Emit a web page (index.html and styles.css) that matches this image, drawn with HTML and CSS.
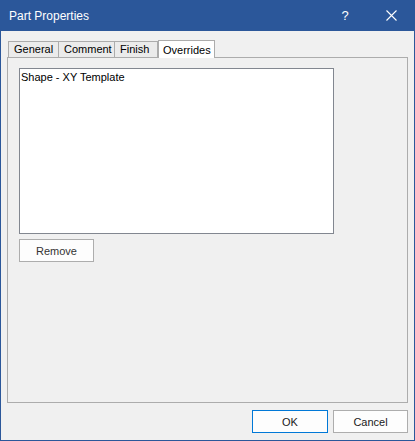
FILE: index.html
```html
<!DOCTYPE html>
<html>
<head>
<meta charset="utf-8">
<link rel="stylesheet" href="styles.css">
</head>
<body>
<div class="window">
  <div class="titlebar">
    <span class="title">Part Properties</span>
    <span class="help">?</span>
    <span class="close">
      <svg width="11" height="11" viewBox="0 0 11 11"><path d="M0.5 0.5 L10.5 10.5 M10.5 0.5 L0.5 10.5" stroke="#fff" stroke-width="1.1" fill="none"/></svg>
    </span>
  </div>
  <div class="content">
    <div class="tabs">
      <div class="tab t-general">General</div>
      <div class="tab t-comment">Comment</div>
      <div class="tab t-finish">Finish</div>
      <div class="tab t-overrides selected">Overrides</div>
    </div>
    <div class="panel">
      <div class="listbox">
        <div class="item">Shape - XY Template</div>
      </div>
      <div class="btn remove">Remove</div>
    </div>
    <div class="footer">
      <div class="btn ok">OK</div>
      <div class="btn cancel">Cancel</div>
    </div>
  </div>
</div>
</body>
</html>
```

FILE: styles.css
```css
* { box-sizing: border-box; }
html, body { margin: 0; padding: 0; }
body {
  width: 415px;
  height: 441px;
  overflow: hidden;
  font-family: "Liberation Sans", Arial, sans-serif;
  font-size: 11px;
  color: #000;
}
.window {
  width: 415px;
  height: 441px;
  background: #f0f0f0;
  border: 1px solid #2b579a;
  border-top: none;
  display: flex;
  flex-direction: column;
}
.titlebar {
  height: 31px;
  margin: 0 -1px;
  background: #2b579a;
  color: #fff;
  display: flex;
  align-items: center;
  flex: none;
}
.title {
  font-size: 12px;
  padding-left: 9px;
  flex: 1;
}
.help {
  font-size: 13px;
  width: 14px;
  margin-right: 34px;
  text-align: center;
}
.close {
  width: 11px;
  height: 11px;
  margin-right: 18px;
  display: flex;
}
.content {
  flex: 1;
  display: flex;
  flex-direction: column;
  padding: 9px 6px 7px 6px;
}
.tabs {
  height: 17px;
  display: flex;
  align-items: flex-end;
  padding-left: 1px;
  flex: none;
}
.tab {
  height: 16px;
  border: 1px solid #acacac;
  border-bottom: none;
  background: #ebebeb;
  line-height: 14px;
  padding-left: 5px;
  margin-right: -1px;
  white-space: nowrap;
}
.t-general { width: 51px; }
.t-comment { width: 57px; }
.t-finish { width: 44px; }
.tab.selected {
  width: 57px;
  height: 18px;
  margin-bottom: -1px;
  margin-left: 1px;
  background: #fff;
  position: relative;
  z-index: 1;
  line-height: 19px;
  padding-left: 4px;
}
.panel {
  height: 346px;
  border: 1px solid #acacac;
  padding: 10px 0 0 11px;
  flex: none;
}
.listbox {
  width: 315px;
  height: 166px;
  background: #fff;
  border: 1px solid #828790;
  padding: 0 0 0 1px;
}
.item {
  line-height: 14px;
  padding-top: 1px;
}
.btn {
  height: 23px;
  border: 1px solid #adadad;
  background: #fdfdfd;
  display: flex;
  align-items: center;
  justify-content: center;
  color: #1a1a1a;
}
.remove {
  width: 75px;
  margin-top: 5px;
  color: #333;
}
.footer {
  margin-top: 7px;
  display: flex;
  justify-content: flex-end;
  gap: 5px;
  flex: none;
}
.ok {
  width: 76px;
  border-color: #0078d7;
}
.cancel {
  width: 75px;
}
```
